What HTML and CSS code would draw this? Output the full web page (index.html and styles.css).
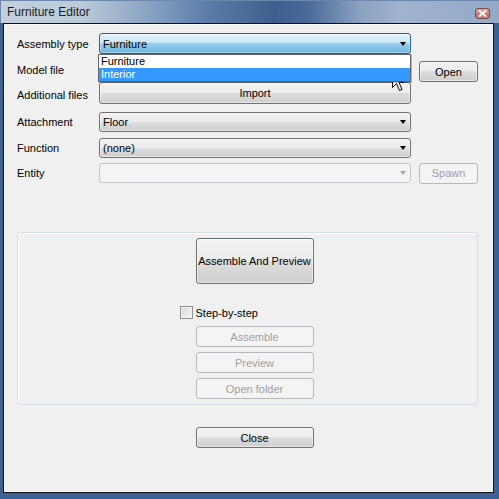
FILE: index.html
```html
<!DOCTYPE html>
<html lang="en">
<head>
    <meta charset="UTF-8">
    <title>Furniture Editor</title>
    <link rel="stylesheet" href="styles.css">
</head>
<body>
    <div class="window">
        <div class="titlebar">
            <span class="title">Furniture Editor</span>
            <span class="close-box">
                <svg width="9" height="7" viewBox="0 0 9 7"><path d="M1 0.5 L8 6.5 M8 0.5 L1 6.5" stroke="#fff" stroke-width="1.8"/></svg>
            </span>
        </div>
        <div class="frame">
            <div class="client">
                <div class="form">
                    <div class="row row-type">
                        <label>Assembly type</label>
                        <div class="combo is-open">Furniture<span class="arrow"></span></div>
                        <ul class="popup">
                            <li>Furniture</li>
                            <li class="selected">Interior</li>
                        </ul>
                    </div>
                    <div class="row row-model">
                        <label class="lift">Model file</label>
                        <div class="line-edit"></div>
                        <button class="btn side">Open</button>
                    </div>
                    <div class="row row-extra">
                        <label class="drop">Additional files</label>
                        <button class="btn field">Import</button>
                    </div>
                    <div class="row row-attach">
                        <label>Attachment</label>
                        <div class="combo">Floor<span class="arrow"></span></div>
                    </div>
                    <div class="row row-func">
                        <label>Function</label>
                        <div class="combo">(none)<span class="arrow"></span></div>
                    </div>
                    <div class="row row-entity">
                        <label>Entity</label>
                        <div class="combo disabled"><span class="arrow"></span></div>
                        <button class="btn side" disabled>Spawn</button>
                    </div>
                </div>

                <div class="group">
                    <div class="stack">
                        <button class="btn btn-big">Assemble And Preview</button>
                        <div class="check-row">
                            <span class="checkbox"></span>
                            <span>Step-by-step</span>
                        </div>
                        <button class="btn" disabled>Assemble</button>
                        <button class="btn" disabled>Preview</button>
                        <button class="btn" disabled>Open folder</button>
                    </div>
                </div>

                <div class="footer">
                    <div class="stack">
                        <button class="btn">Close</button>
                    </div>
                </div>
            </div>
        </div>

        <!-- mouse pointer over the open list -->
        <svg class="pointer" width="14" height="22" viewBox="0 0 14 22">
            <path d="M0.5 0.5 L0.5 16.5 L4.5 12.5 L7.5 19.5 L10 18.5 L7 11.5 L12 11.5 Z" fill="#fff" stroke="#000" stroke-width="1" stroke-linejoin="miter"/>
        </svg>
    </div>
</body>
</html>
```

FILE: styles.css
```css
body {
    margin: 0;
    font-family: "Liberation Sans", Arial, sans-serif;
    font-size: 11px;
    color: #000;
}
.window {
    position: relative;
    width: 499px;
    height: 499px;
    display: flex;
    flex-direction: column;
    background: #3e6193;
}
.titlebar {
    height: 23px;
    display: flex;
    align-items: center;
    background: linear-gradient(to right, #c4cfdc 0%, #bccad9 16%, #8fa8c6 28%, #5b7ca8 42%, #3e5e8d 55%, #4a6b99 62%, #8aa1c1 72%, #9fb3cd 80%, #93a9c6 100%);
    box-shadow: inset 1px 1px 0 #6d88ad;
}
.title {
    margin-left: 7px;
    font-size: 12px;
    color: #1b1b1b;
    padding-top: 1px;
}
.close-box {
    margin-left: auto;
    margin-right: 9px;
    margin-top: 3px;
    width: 15px;
    height: 11px;
    box-sizing: border-box;
    border: 1px solid #7a4a48;
    border-radius: 3px;
    background: linear-gradient(#dcaaa6, #c98884 50%, #b86c67 51%, #c98a85);
    display: flex;
    align-items: center;
    justify-content: center;
}
.frame {
    flex: 1;
    display: flex;
    padding: 0 6px 6px 3px;
}
.client {
    flex: 1;
    background: #f0f0f0;
    border: 1px solid #101010;
    box-shadow: inset 0 0 0 1px #fafafa;
    padding: 9px 15px 0 13px;
}

/* form rows */
.row {
    position: relative;
    display: flex;
    align-items: center;
}
.row label {
    width: 82px;
    flex: none;
}
.row .lift {
    margin-top: -3px;
}
.row .drop {
    margin-top: 3px;
}
.row-type { height: 21px; }
.row-model { height: 22px; margin-top: 6px; }
.row-extra { height: 22px; }
.row-attach { height: 20px; margin-top: 8px; }
.row-func { height: 20px; margin-top: 6px; }
.row-entity { height: 20px; margin-top: 5px; }

.btn {
    box-sizing: border-box;
    height: 21px;
    padding: 0;
    border: 1px solid #707070;
    border-radius: 3px;
    background: linear-gradient(#f2f2f2 0%, #ebebeb 50%, #dddddd 50%, #cfcfcf 100%);
    box-shadow: inset 0 0 0 1px rgba(255, 255, 255, 0.55);
    font: inherit;
    color: #000;
}
.btn:disabled {
    border-color: #b5b9bc;
    background: #f4f4f4;
    box-shadow: none;
    color: #a0a0a0;
}
.btn.field {
    width: 312px;
    height: 22px;
}
.btn.side {
    width: 59px;
    margin-left: 8px;
}
.row-model .btn.side {
    align-self: flex-start;
    margin-top: 1px;
}

.combo {
    position: relative;
    box-sizing: border-box;
    width: 312px;
    height: 100%;
    padding-left: 3px;
    display: flex;
    align-items: center;
    border: 1px solid #707070;
    border-radius: 3px;
    background: linear-gradient(#f2f2f2 0%, #ebebeb 50%, #dddddd 50%, #cfcfcf 100%);
    box-shadow: inset 0 0 0 1px rgba(255, 255, 255, 0.55);
}
.combo.is-open {
    border-color: #2c628b;
    background: linear-gradient(#e5f4fc 0%, #c4e5f6 50%, #98d1ef 50%, #6fb6de 100%);
    box-shadow: inset 0 0 0 1px rgba(255, 255, 255, 0.35);
}
.combo.disabled {
    border-color: #c3c6c8;
    background: #f4f4f4;
    box-shadow: none;
}
.arrow {
    position: absolute;
    right: 4px;
    top: 50%;
    margin-top: -2px;
    border-left: 3.5px solid transparent;
    border-right: 3.5px solid transparent;
    border-top: 4px solid #000;
}
.combo.disabled .arrow {
    border-top-color: #a6a6a6;
}
.line-edit {
    box-sizing: border-box;
    width: 312px;
    height: 20px;
    background: #fff;
    border: 1px solid #abadb3;
}

/* open list of the assembly type box */
.popup {
    position: absolute;
    left: 81px;
    top: 21px;
    width: 313px;
    margin: 0;
    padding: 0;
    list-style: none;
    box-sizing: border-box;
    border: 1px solid #646464;
    background: #fff;
    box-shadow: 1px 1px 0 rgba(0, 0, 0, 0.25);
    z-index: 2;
}
.popup li {
    height: 13px;
    line-height: 13px;
    padding-left: 2px;
}
.popup li.selected {
    background: #3399ff;
    color: #fff;
}

/* assemble box */
.group {
    margin-top: 49px;
    height: 173px;
    box-sizing: border-box;
    border: 1px solid #d5dfe5;
    border-radius: 3px;
    box-shadow: inset 1px 1px 0 #fff;
    padding-top: 5px;
}
.stack {
    width: 136px;
    margin: 0 auto;
    display: flex;
    flex-direction: column;
    gap: 5px;
}
.stack .btn {
    width: 118px;
    margin-left: 16px;
}
.stack .btn-big {
    height: 46px;
    margin-bottom: 15px;
}
.check-row {
    height: 17px;
    display: flex;
    align-items: center;
    gap: 3px;
}
.checkbox {
    width: 13px;
    height: 13px;
    box-sizing: border-box;
    border: 1px solid #8f8f8f;
    background: linear-gradient(135deg, #d8d8d8, #f6f6f6);
    box-shadow: inset 0 0 0 1px #f4f4f4;
}
.footer {
    margin-top: 22px;
}

.pointer {
    position: absolute;
    left: 392px;
    top: 71px;
}
```
